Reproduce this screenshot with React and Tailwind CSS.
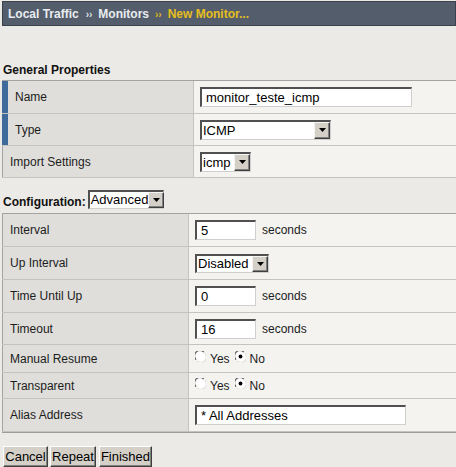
import React from "react";

const inset =
  "bg-white border-t-2 border-l-2 border-b border-r border-t-[#505050] border-l-[#505050] border-b-[#cfcfcf] border-r-[#cfcfcf]";

function Arrow() {
  return (
    <div className="h-full w-[16px] shrink-0 bg-[#d4d0c8] border border-t-[#f4f4f4] border-l-[#f4f4f4] border-b-[#404040] border-r-[#404040] shadow-[inset_-1px_-1px_0_#808080] flex items-center justify-center">
      <svg width="7" height="4" viewBox="0 0 7 4">
        <path d="M0 0H7L3.5 4Z" fill="#000" />
      </svg>
    </div>
  );
}

function Select({ value, className }) {
  return (
    <div className={`${inset} ${className} flex items-stretch text-[13px] leading-none text-black`}>
      <div className="flex-1 flex items-center pl-[1px]">{value}</div>
      <Arrow />
    </div>
  );
}

function TextBox({ value, className }) {
  return (
    <div className={`${inset} ${className} flex items-center pl-[4px] text-[13px] leading-none text-black`}>
      {value}
    </div>
  );
}

function Radio({ checked }) {
  return (
    <svg width="11" height="11" viewBox="0 0 12 12" className="mb-[4px] shrink-0">
      <circle cx="6" cy="6" r="5.5" fill="#fff" />
      <path d="M1.2 9.5A5.5 5.5 0 0 1 9.5 1.2" fill="none" stroke="#555" strokeWidth="1.2" />
      <path d="M10.8 2.5A5.5 5.5 0 0 1 2.5 10.8" fill="none" stroke="#d8d8d8" strokeWidth="1" />
      {checked && <circle cx="6" cy="6" r="2.1" fill="#000" />}
    </svg>
  );
}

function Row1({ label, blue, h, children }) {
  return (
    <div className={`flex border-b border-[#c4c3bf] ${h}`}>
      <div className="w-[192px] shrink-0 flex items-center bg-[#dfdeda] border-r border-[#c4c3bf]">
        {blue ? (
          <div className="self-stretch w-[6px] bg-[#3e6b9c]" />
        ) : (
          <div className="self-stretch w-px bg-[#a3a3a3]" />
        )}
        <div className="pl-[7px]">{label}</div>
      </div>
      <div className="flex-1 flex items-center bg-[#f4f3f0] pl-[6px]">{children}</div>
    </div>
  );
}

function Row2({ label, h, children }) {
  return (
    <div className={`flex border-b border-[#c4c3bf] ${h}`}>
      <div className="w-[187px] shrink-0 flex items-center bg-[#dfdeda] border-r border-[#c4c3bf]">
        <div className="self-stretch w-px bg-[#a3a3a3]" />
        <div className="pl-[7px]">{label}</div>
      </div>
      <div className="flex-1 flex items-center bg-[#f4f3f0] pl-[6px]">{children}</div>
    </div>
  );
}

function Btn({ label, className }) {
  return (
    <div
      className={`${className} h-[21px] flex items-center justify-center bg-[#d4d0c8] border border-t-white border-l-white border-b-[#404040] border-r-[#404040] shadow-[inset_-1px_-1px_0_#808080] text-[13px] leading-none text-black`}
    >
      {label}
    </div>
  );
}

export default function App() {
  return (
    <div className="w-[456px] h-[467px] overflow-hidden bg-[#ebeae6] font-['Liberation_Sans',Arial,sans-serif] text-[12px] text-[#1c1c1c]">
      <div className="mt-px ml-[2px] h-[25px] bg-[#545d6b] border border-[#3a414c] flex items-center pl-[5px] font-bold text-[12px] leading-none">
        <span className="text-[#e8ecf0]">Local Traffic</span>
        <span className="ml-[7px] text-[#dfe3e8] text-[10px] mt-[3px]">››</span>
        <span className="ml-[6px] text-[#e8ecf0]">Monitors</span>
        <span className="ml-[6px] text-[#dcb820] text-[10px] mt-[3px]">››</span>
        <span className="ml-[6px] text-[#e4bf1e]">New Monitor...</span>
      </div>

      <div className="mt-[37px] ml-[3px] font-bold leading-[14px] text-[#111]">General Properties</div>

      <div className="mt-[3px] ml-[2px] border-t border-[#a3a3a3]">
        <Row1 label="Name" blue h="h-[33px]">
          <TextBox value="monitor_teste_icmp" className="w-[212px] h-[20px]" />
        </Row1>
        <Row1 label="Type" blue h="h-[32px]">
          <Select value="ICMP" className="w-[131px] h-[20px]" />
        </Row1>
        <Row1 label="Import Settings" h="h-[32px]">
          <Select value="icmp" className="w-[51px] h-[20px]" />
        </Row1>
      </div>

      <div className="mt-[11px] ml-[3px] h-[20px] flex items-center">
        <span className="font-bold text-[#111] mt-[5px]">Configuration:</span>
        <Select value="Advanced" className="ml-[2px] w-[76px] h-[19px]" />
      </div>

      <div className="mt-[4px] ml-[2px] border-t border-[#a3a3a3]">
        <Row2 label="Interval" h="h-[33px]">
          <TextBox value="5" className="w-[61px] h-[20px]" />
          <span className="ml-[6px]">seconds</span>
        </Row2>
        <Row2 label="Up Interval" h="h-[33px]">
          <Select value="Disabled" className="w-[74px] h-[19px]" />
        </Row2>
        <Row2 label="Time Until Up" h="h-[33px]">
          <TextBox value="0" className="w-[61px] h-[20px]" />
          <span className="ml-[6px]">seconds</span>
        </Row2>
        <Row2 label="Timeout" h="h-[32px]">
          <TextBox value="16" className="w-[61px] h-[20px]" />
          <span className="ml-[6px]">seconds</span>
        </Row2>
        <Row2 label="Manual Resume" h="h-[28px]">
          <Radio />
          <span className="ml-[4px]">Yes</span>
          <span className="ml-[5px]"><Radio checked /></span>
          <span className="ml-[4px]">No</span>
        </Row2>
        <Row2 label="Transparent" h="h-[26px]">
          <Radio />
          <span className="ml-[4px]">Yes</span>
          <span className="ml-[5px]"><Radio checked /></span>
          <span className="ml-[4px]">No</span>
        </Row2>
        <div className="border-b border-[#9c9c9c]">
          <Row2 label="Alias Address" h="h-[33px]">
            <TextBox value="* All Addresses" className="w-[211px] h-[20px]" />
          </Row2>
        </div>
      </div>

      <div className="mt-[13px] ml-[3px] flex">
        <Btn label="Cancel" className="w-[45px]" />
        <Btn label="Repeat" className="ml-[2px] w-[46px]" />
        <Btn label="Finished" className="ml-[3px] w-[53px]" />
      </div>
    </div>
  );
}
